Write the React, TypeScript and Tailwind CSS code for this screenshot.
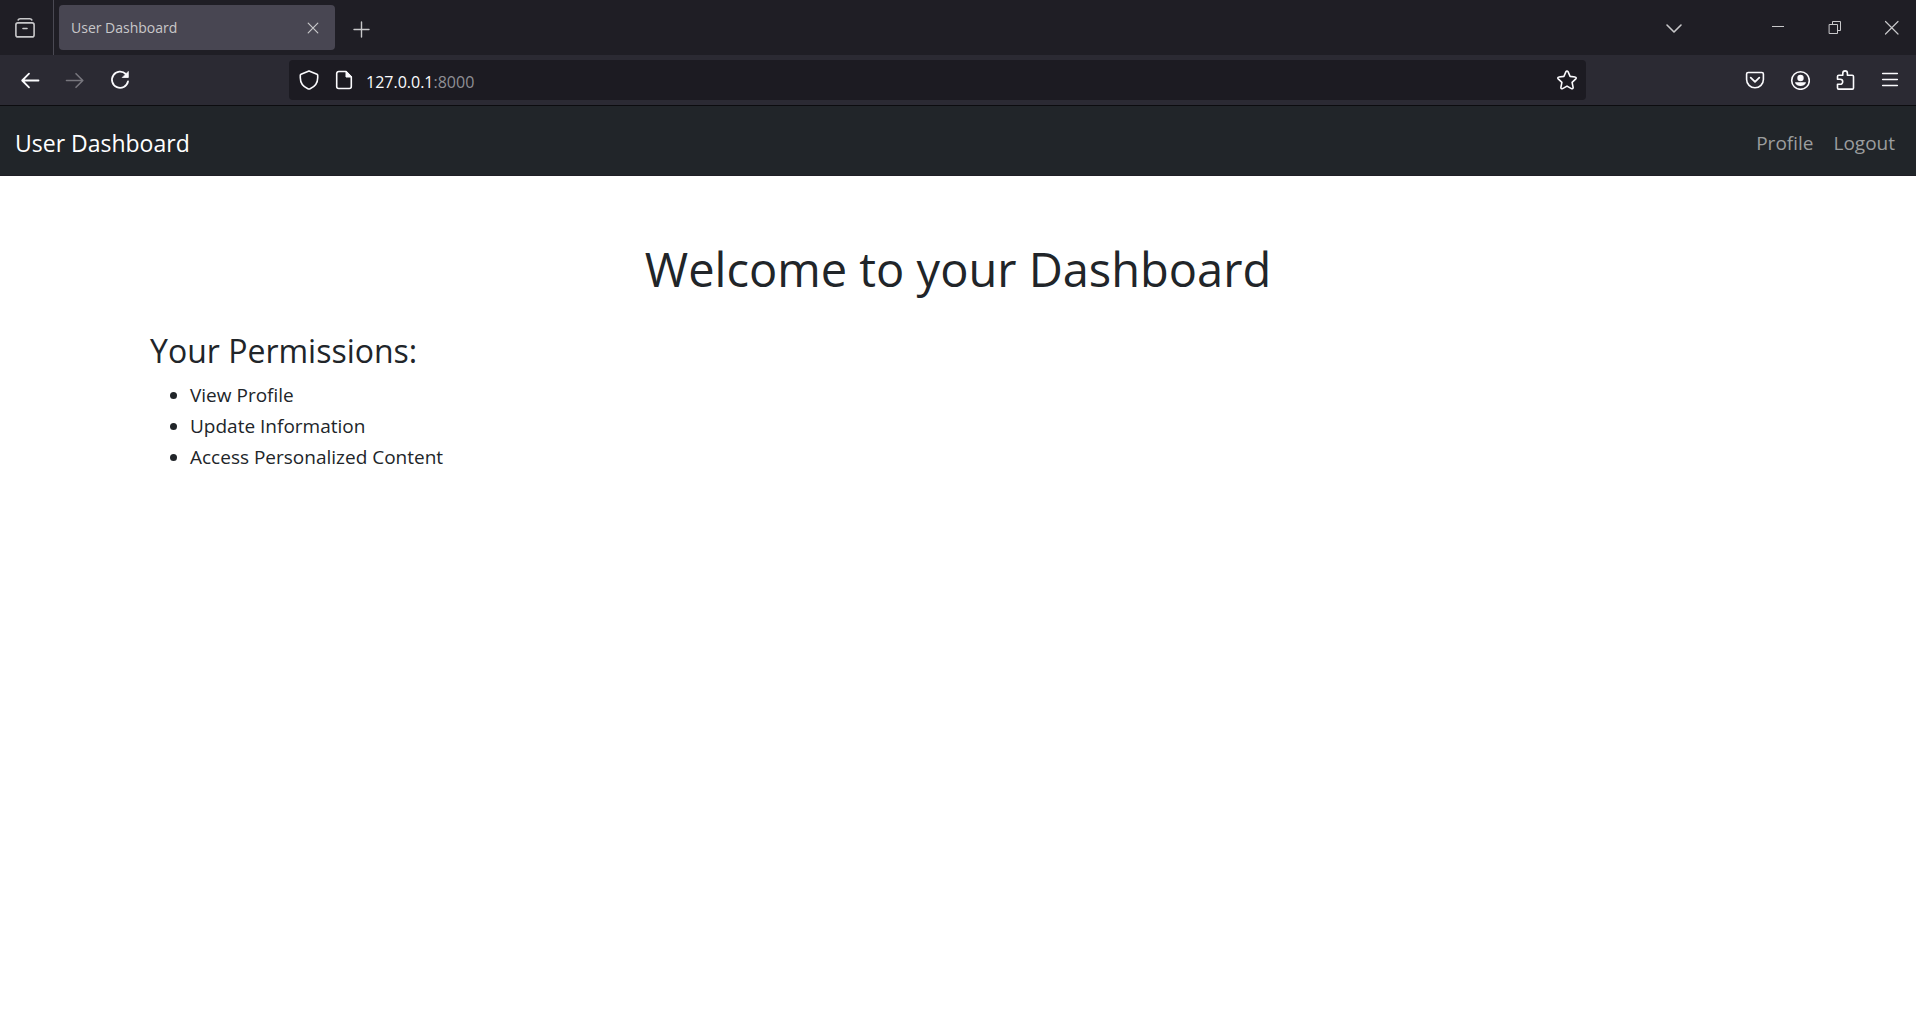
import React from "react";

const permissions = ["View Profile", "Update Information", "Access Personalized Content"];

type IconProps = { children: React.ReactNode; className?: string };

function Icon({ children, className = "size-5" }: IconProps) {
  return (
    <svg
      viewBox="0 0 20 20"
      className={className}
      fill="none"
      stroke="currentColor"
      strokeWidth="1.6"
      strokeLinecap="round"
      strokeLinejoin="round"
      aria-hidden="true"
    >
      {children}
    </svg>
  );
}

function IconButton({ label, className, children }: { label: string; className: string; children: React.ReactNode }) {
  return (
    <button type="button" aria-label={label} className={`flex shrink-0 items-center justify-center ${className}`}>
      {children}
    </button>
  );
}

function TabBar() {
  return (
    <div className="flex h-[55px] items-center bg-[#1f1e25] text-[#c8c8ca]">
      <div className="flex h-full w-[54px] shrink-0 items-center justify-center border-r border-[#4a4953] pr-1">
        <IconButton label="Recent browsing" className="size-8">
          <Icon>
            <path d="M3.200 1.900C3.600 1 4.400.8 5.200.8h9.600c.8 0 1.600.200 2 1.100" />
            <rect x=".9" y="4.900" width="18.200" height="14" rx="2" />
            <path d="M8 10.500h4" />
          </Icon>
        </IconButton>
      </div>
      <div className="ml-[5px] flex h-[45px] w-[276px] items-center justify-between rounded bg-[#484652] pr-2 pl-3">
        <span className="text-sm leading-5">User Dashboard</span>
        <IconButton label="Close tab" className="size-7">
          <Icon>
            <path d="M5.200 5.200l9.600 9.600M14.800 5.200l-9.600 9.600" strokeWidth="1.200" />
          </Icon>
        </IconButton>
      </div>
      <IconButton label="New tab" className="ml-2 size-9">
        <Icon>
          <path d="M3 11.500h15M10.500 4v15" strokeWidth="1.400" />
        </Icon>
      </IconButton>
      <div className="ml-auto flex gap-2">
        <IconButton label="List all tabs" className="mr-[53px] size-9">
          <Icon>
            <path d="M3 7l7 7 7-7" strokeWidth="1.600" />
          </Icon>
        </IconButton>
        <IconButton label="Minimize" className="h-9 w-[49px]">
          <Icon>
            <path d="M4 8.500h12" strokeWidth="1" strokeLinecap="butt" />
          </Icon>
        </IconButton>
        <IconButton label="Restore" className="h-9 w-[49px]">
          <Icon>
            <path d="M4.500 6.500h8v9h-8zM7.500 6.500v-3h8v9h-3" strokeWidth="1" strokeLinejoin="miter" />
          </Icon>
        </IconButton>
        <IconButton label="Close window" className="h-9 w-[49px]">
          <Icon>
            <path d="M3.500 3.500l12.500 12.500M16 3.500L3.500 16" strokeWidth="1.200" />
          </Icon>
        </IconButton>
      </div>
    </div>
  );
}

function Toolbar() {
  return (
    <div className="flex h-[51px] items-center border-b border-[#0c0c0f] bg-[#2b2a33] text-[#fbfbfe]">
      <div className="flex w-[289px] shrink-0 gap-1 pl-[9px]">
        <IconButton label="Back" className="h-10 w-[41px]">
          <Icon>
            <path d="M18.500 10.500H2.500M9 3.700L2.200 10.500l6.800 6.800" strokeWidth="1.800" />
          </Icon>
        </IconButton>
        <IconButton label="Forward" className="h-10 w-[41px] text-[#77767d]">
          <Icon>
            <path d="M1.500 10.500h16M11 3.700l6.800 6.800-6.800 6.800" />
          </Icon>
        </IconButton>
        <IconButton label="Reload" className="h-10 w-[41px]">
          <Icon>
            <path d="M18 11.500A8.100 8.100 0 1 1 15.800 4" strokeWidth="1.800" />
            <path d="M18.300 1.800v5.700h-5.700z" fill="currentColor" strokeWidth=".8" />
          </Icon>
        </IconButton>
      </div>
      <div className="flex h-10 flex-1 items-center rounded bg-[#1c1b22] px-1">
        <IconButton label="Tracking protection" className="h-9 w-8">
          <Icon>
            <path d="M10 .9l8 3.300c.4.200.7.500.7 1v2.600c0 4.800-3 9-7.600 11a2.500 2.500 0 0 1-2.200 0C4.300 16.800 1.300 12.600 1.300 7.800V5.200c0-.5.300-.8.700-1z" />
          </Icon>
        </IconButton>
        <IconButton label="Site information" className="ml-[3px] h-9 w-8">
          <Icon>
            <path d="M12 1.500H4.700a2 2 0 0 0-2 2v13a2 2 0 0 0 2 2h10.600a2 2 0 0 0 2-2V7z" />
            <path d="M12 1.500V7h5.300z" fill="currentColor" strokeWidth="1" />
          </Icon>
        </IconButton>
        <div className="ml-1.5 flex flex-1 items-center pt-[3px] text-base leading-6">
          <input
            type="text"
            aria-label="Address"
            defaultValue="127.0.0.1"
            className="bg-transparent outline-none [field-sizing:content]"
          />
          <span className="text-[#8f8f95]">:8000</span>
        </div>
        <IconButton label="Bookmark this page" className="h-9 w-[30px]">
          <Icon>
            <path d="M10 1c.5 0 .8.300 1 .7l2.100 4.700 5 .6c1.100.1 1.400 1.200.7 1.900l-3.700 3.500 1 5c.2 1-.8 1.700-1.700 1.200L10 16.100l-4.400 2.500c-.9.500-1.900-.2-1.700-1.200l1-5-3.700-3.500C.5 8.200.8 7.100 1.900 7l5-.6L9 1.700c.2-.4.500-.7 1-.7z" />
          </Icon>
        </IconButton>
      </div>
      <div className="flex w-[330px] shrink-0 justify-end gap-1 pr-1.5">
        <IconButton label="Save to Pocket" className="h-10 w-[41px]">
          <Icon>
            <path d="M3.200 2.500h13.600c.9 0 1.600.7 1.600 1.600v5.300a8.400 8.400 0 0 1-16.800 0V4.100c0-.9.700-1.600 1.600-1.600z" />
            <path d="M5.700 7.700L10 11.900l4.300-4.200" strokeWidth="1.800" />
          </Icon>
        </IconButton>
        <IconButton label="Account" className="h-10 w-[41px]">
          <Icon>
            <circle cx="10.500" cy="10.500" r="8.800" />
            <circle cx="10.500" cy="8" r="3.200" fill="currentColor" stroke="none" />
            <path d="M5.500 12.300h10c.4 0 .6.300.4.700-1 1.900-3 3-5.400 3s-4.400-1.100-5.400-3c-.2-.4 0-.7.400-.7z" fill="currentColor" stroke="none" />
          </Icon>
        </IconButton>
        <IconButton label="Extensions" className="h-10 w-[41px]">
          <Icon>
            <path d="M2.500 18V14.300h2.700a2.500 2.500 0 0 0 0-5H2.500V6.600c0-.8.500-1.300 1.300-1.300h4V3.200a2.300 2.300 0 0 1 4.600 0v2.100h4.800c.8 0 1.300.5 1.300 1.300V18c0 .7-.4 1.100-1.100 1.100H3.600c-.7 0-1.100-.4-1.100-1.100z" />
          </Icon>
        </IconButton>
        <IconButton label="Open application menu" className="h-10 w-[41px]">
          <Icon>
            <path d="M2.700 3.500h14.600M2.700 9.500h14.600M2.700 15.500h14.600" />
          </Icon>
        </IconButton>
      </div>
    </div>
  );
}

function SiteNav() {
  return (
    <nav className="flex h-[70px] items-center justify-between border-b border-[#1f1e25] bg-[#212529] px-[15px] pt-1">
      <a href="#" className="text-[23px] leading-9 text-white">
        User Dashboard
      </a>
      <div className="flex gap-5 pr-1.5 text-[19px] leading-8 text-[#9b9d9e]">
        <a href="#profile">Profile</a>
        <a href="#logout">Logout</a>
      </div>
    </nav>
  );
}

export default function App() {
  return (
    <div className="min-h-screen bg-white font-['Segoe_UI','Open_Sans',sans-serif] text-[#212529]">
      <header>
        <TabBar />
        <Toolbar />
        <SiteNav />
      </header>
      <main className="mx-auto max-w-[1650px] px-[17px] pt-[63px]">
        <h1 className="text-center text-[47px] leading-[60px]">Welcome to your Dashboard</h1>
        <h2 className="mt-[30px] text-[32px] leading-[44px]">Your Permissions:</h2>
        <ul className="mt-[7px] list-disc pl-10 text-[19px] leading-[31px]">
          {permissions.map((permission) => (
            <li key={permission}>{permission}</li>
          ))}
        </ul>
      </main>
    </div>
  );
}
